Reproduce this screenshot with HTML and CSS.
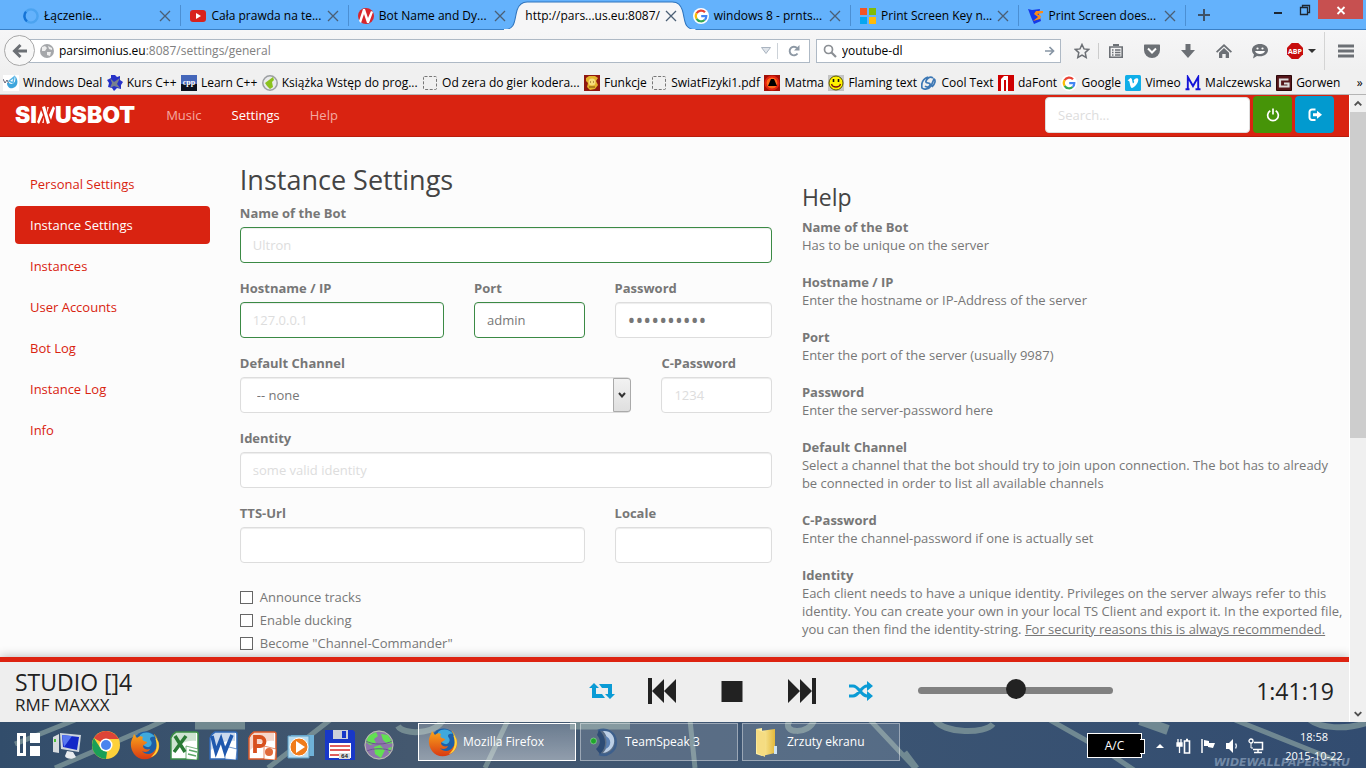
FILE: index.html
```html
<!DOCTYPE html>
<html lang="en">
<head>
<meta charset="utf-8">
<title>SinusBot - Instance Settings</title>
<link rel="stylesheet" href="styles.css">
</head>
<body>
<svg class="defs" width="0" height="0" aria-hidden="true">
  <defs>
    <linearGradient id="ff" x1="0" y1="0" x2="0" y2="1"><stop offset="0" stop-color="#f9a51b"/><stop offset="1" stop-color="#d93a12"/></linearGradient>
    <linearGradient id="fold" x1="0" y1="0" x2="1" y2="0"><stop offset="0" stop-color="#fff3b0"/><stop offset="1" stop-color="#e3b93c"/></linearGradient>
    <symbol id="close" viewBox="0 0 12 12"><path d="M1 1l10 10M11 1L1 11" fill="none" stroke="#4b5f75" stroke-width="1.3"/></symbol>
    <symbol id="google" viewBox="0 0 16 16"><circle cx="8" cy="8" r="8" fill="#fff"/><g fill="none" stroke-width="2.2"><path d="M12 4.2A5.3 5.3 0 0 0 3.6 5.2" stroke="#ea4335"/><path d="M3.6 5.2a5.3 5.3 0 0 0 0 5.6" stroke="#fbbc05"/><path d="M3.6 10.8A5.3 5.3 0 0 0 11.6 12" stroke="#34a853"/><path d="M11.6 12A5 5 0 0 0 13.3 8.2H8.2" stroke="#4285f4"/></g></symbol>
    <symbol id="blank" viewBox="0 0 16 16"><rect x="1.5" y="1.5" width="13" height="13" rx="1" fill="none" stroke="#777" stroke-dasharray="3 1.6"/></symbol>
    <symbol id="firefox" viewBox="0 0 30 30"><circle cx="15.5" cy="14" r="12.5" fill="#1d5fa8"/><path d="M10 5c4-4 12-3 15 2-5-1-6 2-4 4 2 3-1 7-4 6-5-2-9-6-7-12z" fill="#3fa9dc"/><path d="M24 5c6 5 7 14 2 19-6 7-17 7-22 0C0 18 0 12 3 7l1-3 3 4c2-2 4-2 6-1-1 2-1 3 1 4l3 1c0 2-3 2-4 4 0 3 4 4 7 3-1 3-5 4-8 2 3 4 10 4 13-1 3-4 2-8 0-11 1 0 2 1 3 3 0-3-1-5-4-8z" fill="url(#ff)"/><path d="M25 6c5 6 5 13 1 18-2 2-4 3-5 3 6-5 7-11 4-21z" fill="#ffd63c"/></symbol>
    <symbol id="office" viewBox="0 0 30 30"><path d="M7 2h20a2 2 0 0 1 2 2v25H2V8c1-2 3-5 5-6z" fill="#fff" stroke="currentColor" stroke-width="1.5"/><path d="M7 2h20v9C19 10 11 13 3 20V8z" fill="currentColor" opacity=".25"/><path d="M17 16l12 3-1 11-11-1z" fill="#fff" stroke="currentColor" stroke-width=".7"/></symbol>
  </defs>
</svg>

<header class="browser">
  <div class="tabstrip">
    <nav class="tabs" aria-label="Tabs">
      <div class="tab"><svg class="fav" viewBox="0 0 16 16"><circle cx="8" cy="8" r="6.6" fill="none" stroke="#4ba3f0" stroke-width="2.4"/><path d="M4 13.300A6.600 6.600 0 0 1 3 3.800" fill="none" stroke="#1573d6" stroke-width="2.400"/></svg><span class="tab-title">Łączenie...</span><button class="x" aria-label="Close"><svg viewBox="0 0 12 12"><use href="#close"/></svg></button></div>
      <div class="tab"><svg class="fav" viewBox="0 0 16 16"><rect y="2" width="16" height="12" rx="3" fill="#d8221e"/><path d="M6 5v6l5-3z" fill="#fff"/></svg><span class="tab-title">Cała prawda na te...</span><button class="x" aria-label="Close"><svg viewBox="0 0 12 12"><use href="#close"/></svg></button></div>
      <div class="tab tab-plain"><svg class="fav" viewBox="0 0 16 16"><circle cx="8" cy="8" r="8" fill="#d9262c"/><path d="M1 13L5 1l2 0 3 9 3-7 2 1-4 11H9L6 6l-3 9z" fill="#fff"/></svg><span class="tab-title">Bot Name and Dy...</span><button class="x" aria-label="Close"><svg viewBox="0 0 12 12"><use href="#close"/></svg></button></div>
      <div class="tab tab-active"><svg class="tab-shape" viewBox="0 0 190 30" preserveAspectRatio="none"><path d="M0 30C12 29 10 20 13 10c2-6 5-8 10-8h144c6 0 8 3 10 8 3 10 1 19 13 20z" fill="#f6f6f7" stroke="#2e74bd"/><path d="M0 30h190" stroke="#f6f6f7" stroke-width="2"/></svg><span class="tab-title">http://pars...us.eu:8087/</span><button class="x" aria-label="Close"><svg viewBox="0 0 12 12"><use href="#close"/></svg></button></div>
      <div class="tab"><svg class="fav" viewBox="0 0 16 16"><use href="#google"/></svg><span class="tab-title">windows 8 - prnts...</span><button class="x" aria-label="Close"><svg viewBox="0 0 12 12"><use href="#close"/></svg></button></div>
      <div class="tab"><svg class="fav" viewBox="0 0 16 16"><path d="M0 0h7v7H0z" fill="#f35325"/><path d="M9 0h7v7H9z" fill="#81bc06"/><path d="M0 9h7v7H0z" fill="#05a6f0"/><path d="M9 9h7v7H9z" fill="#ffba08"/></svg><span class="tab-title">Print Screen Key n...</span><button class="x" aria-label="Close"><svg viewBox="0 0 12 12"><use href="#close"/></svg></button></div>
      <div class="tab"><svg class="fav" viewBox="0 0 16 16"><path d="M0 1l4 1 8-1-1 5 2 7-7 3-3-7z" fill="#1639e8"/><path d="M15 3H8L6 6l4 3-5 4 7-2 1-3-4-2 6-1z" fill="#ff8a12"/></svg><span class="tab-title">Print Screen does...</span><button class="x" aria-label="Close"><svg viewBox="0 0 12 12"><use href="#close"/></svg></button></div>
    </nav>
    <button class="newtab" aria-label="New tab"><svg viewBox="0 0 12 12"><path d="M6 0v12M0 6h12" stroke="#3e5268" stroke-width="2"/></svg></button>
    <div class="window-buttons">
      <button aria-label="Minimize"><svg viewBox="0 0 12 12"><path d="M2 9h8" stroke="#1c2733" stroke-width="2"/></svg></button>
      <button aria-label="Restore"><svg viewBox="0 0 12 12"><path d="M1.500 3.500h7v7h-7zM3.500 3V1.500h7v7H9" fill="none" stroke="#1c2733" stroke-width="1.300"/></svg></button>
      <button class="win-close" aria-label="Close window"><svg viewBox="0 0 12 12"><path d="M2.500 3l7 7M9.500 3l-7 7" stroke="#fff" stroke-width="1.800"/></svg></button>
    </div>
  </div>

  <div class="toolbar">
    <button class="back" aria-label="Back"><svg viewBox="0 0 16 16"><path d="M8.500 2L2.500 8l6 6M3 8h12" fill="none" stroke="#6c7075" stroke-width="3"/></svg></button>
    <div class="urlbar">
      <svg class="globe" viewBox="0 0 14 14"><circle cx="7" cy="7" r="7" fill="#a5a7aa"/><path d="M2 3l3-1 2 2-2 3H2zM8 2l4 2v2l-3-1zM7 8l4 0-1 4-3-1z" fill="#eee"/></svg>
      <div class="url" role="textbox" contenteditable="true" spellcheck="false" aria-label="Address"><b>parsimonius.eu</b>:8087/settings/general</div>
      <svg class="drop" viewBox="0 0 10 7"><path d="M.5.500h9L5 6.500z" fill="#dfe4ea" stroke="#aab4c0"/></svg>
      <button class="reload" aria-label="Reload"><svg viewBox="0 0 12 12"><path d="M9.500 8.500A4.300 4.300 0 1 1 9 3" fill="none" stroke="#8d98a4" stroke-width="1.900"/><path d="M11.500 0v5.500H6z" fill="#8d98a4"/></svg></button>
    </div>
    <div class="searchbar">
      <svg class="lens" viewBox="0 0 14 14"><circle cx="5.500" cy="5.500" r="4" fill="none" stroke="#8b8f94" stroke-width="1.700"/><path d="M8.500 8.500l4.500 4.500" stroke="#8b8f94" stroke-width="2.200"/></svg>
      <input type="text" value="youtube-dl" aria-label="Web search">
      <svg class="go" viewBox="0 0 10 10"><path d="M0 5h8M4.500 1l4 4-4 4" fill="none" stroke="#8896a5" stroke-width="1.700"/></svg>
    </div>
    <div class="tools">
      <button class="tool tool-star" aria-label="Bookmark"><svg viewBox="0 0 16 16"><path d="M8 1.500l2 4.400 4.800.500-3.600 3.200 1 4.800L8 12l-4.200 2.400 1-4.800L1.200 6.400 6 5.900z" fill="none" stroke="#6c7075" stroke-width="1.500"/></svg></button>
      <button class="tool tool-line" aria-label="Bookmark list"><svg viewBox="0 0 16 16"><path d="M1.800 4h12.400v10.200H1.800z" fill="none" stroke="#6c7075" stroke-width="1.600"/><path d="M5 3V1h6v2z" fill="#6c7075"/><path d="M4 7h1.500M4 9.500h1.500M4 12h1.500M7 7h5.500M7 9.500h5.500M7 12h5.500" stroke="#6c7075" stroke-width="1.300"/></svg></button>
      <button class="tool" aria-label="Pocket"><svg viewBox="0 0 16 16"><path d="M1 1.500h14c.6 0 1 .4 1 1V7a8 8 0 0 1-16 0V2.500c0-.6.4-1 1-1z" fill="#6c7075"/><path d="M4 5.500l4 4 4-4" fill="none" stroke="#fff" stroke-width="2"/></svg></button>
      <button class="tool" aria-label="Downloads"><svg viewBox="0 0 16 16"><path d="M5.500 1h5v6H15l-7 8-7-8h4.500z" fill="#6c7075"/></svg></button>
      <button class="tool" aria-label="Home"><svg viewBox="0 0 16 16"><path d="M8 1l8 7.500-1.200 1.200L8 3.500 1.200 9.700 0 8.500z" fill="#6c7075"/><path d="M8 5l5 4.700V15H9.700v-4H6.300v4H3V9.700z" fill="#6c7075"/></svg></button>
      <button class="tool" aria-label="Chat"><svg viewBox="0 0 16 16"><path d="M8 1c4.500 0 8 2.600 8 6s-3.500 6.300-8 6.300c-1 0-2-.1-3-.4L1 15.500l1-4C.7 10.300 0 8.800 0 7c0-3.400 3.500-6 8-6z" fill="#6c7075"/><circle cx="5.500" cy="5.500" r="1.100" fill="#fff"/><circle cx="10.500" cy="5.500" r="1.100" fill="#fff"/><path d="M3 8h10c-1 4-9 4-10 0z" fill="#fff"/></svg></button>
      <button class="tool tool-abp" aria-label="Adblock Plus"><svg viewBox="0 0 16 16"><path d="M4.700 0h6.600L16 4.700v6.600L11.300 16H4.700L0 11.300V4.700z" fill="#c70d0d"/><text x="8" y="10.500" class="abp">ABP</text></svg><svg class="caret" viewBox="0 0 8 4"><path d="M0 0h8L4 4z" fill="#333"/></svg></button>
      <button class="tool tool-menu" aria-label="Menu"><svg viewBox="0 0 16 16"><path d="M0 3h16M0 8h16M0 13h16" stroke="#6c7075" stroke-width="3"/></svg></button>
    </div>
  </div>

  <nav class="bookmarks" aria-label="Bookmarks">
    <a href="#"><svg viewBox="0 0 16 16"><path d="M0 0h16v16H0z" fill="#fff"/><path d="M0 4l2 4 2-3 2 4" stroke="#667" fill="none"/><path d="M4 8c0 4 3 6 6 5 5-1 6-8 2-12 1 4 0 7-3 8-3 0-3-2-5-1z" fill="#3da5dc"/><path d="M6 6l5-4-1 6z" fill="none" stroke="#55b4e6" stroke-width="1.500"/></svg>Windows Deal</a>
    <a href="#"><svg viewBox="0 0 16 16"><path d="M8 0l2 2 3-1 0 4 3 2-2 3 0 4-4-1-3 3-2-3-4-1 1-4-2-3 4-2 0-3z" fill="#2732c8"/><path d="M3 3l4 4 6-4-3 6 3 4-6-2-4 2 2-5z" fill="#78808f"/></svg>Kurs C++</a>
    <a href="#"><svg viewBox="0 0 16 16"><path d="M0 0h16v9H0z" fill="#4567ba"/><path d="M0 9h16v7H0z" fill="#0c1220"/><text x="8" y="9.500" class="cpp">cpp</text></svg>Learn C++</a>
    <a href="#"><svg viewBox="0 0 16 16"><circle cx="8" cy="8" r="7.200" fill="#e9eaec" stroke="#9c9fa1" stroke-width="1.500"/><path d="M3 8l4-3 4-3 1 3-2 2 1 5-3 2-3-3z" fill="#8bc21e"/></svg>Książka Wstęp do prog...</a>
    <a href="#"><svg viewBox="0 0 16 16"><use href="#blank"/></svg>Od zera do gier kodera...</a>
    <a href="#"><svg viewBox="0 0 16 16"><path d="M0 0h16v16H0z" fill="#8f1711"/><path d="M2 3l3-2h6l3 2-2 3 2 4-3 4-5 1-3-3 1-4-2-2z" fill="#e4b32c"/><circle cx="8" cy="7" r="3.500" fill="#f6dc7c"/><path d="M6 7h1M9 7h1M5 12h6" stroke="#7b4c0c"/></svg>Funkcje</a>
    <a href="#"><svg viewBox="0 0 16 16"><use href="#blank"/></svg>SwiatFizyki1.pdf</a>
    <a href="#"><svg viewBox="0 0 16 16"><path d="M0 0h16v16H0z" fill="#a30f06"/><circle cx="8" cy="8" r="6" fill="#ff6a1c"/><circle cx="8" cy="8" r="6.500" fill="none" stroke="#e32412" stroke-width="2"/><path d="M4 11l3-7h3l3 7z" fill="#000"/></svg>Matma</a>
    <a href="#"><svg viewBox="0 0 16 16"><path d="M0 0h16v16H0z" fill="#c4c4c4"/><circle cx="8" cy="8" r="7" fill="#fff200" stroke="#5a5600"/><path d="M5.500 4v3M10.500 4v3" stroke="#111" stroke-width="1.600"/><path d="M3.500 9c1 4 8 4 9 0" fill="none" stroke="#711" stroke-width="1.300"/></svg>Flaming text</a>
    <a href="#"><svg viewBox="0 0 16 16"><path d="M7 2C2 4 0 8 1 13c2 2 7 1 9-2l3-7c2 1 1 5-2 8M12 3C9 1 6 3 5 6s5 1 4 4-4 2-5 1" fill="none" stroke="#3d78b5" stroke-width="1.700"/></svg>Cool Text</a>
    <a href="#"><svg viewBox="0 0 16 16"><path d="M0 0h16v16H0z" fill="#cf0000"/><path d="M3 4l3-3h4v15H8V5H6v11H3z" fill="#fff"/></svg>daFont</a>
    <a href="#"><svg viewBox="0 0 16 16"><use href="#google"/></svg>Google</a>
    <a href="#"><svg viewBox="0 0 16 16"><rect width="16" height="16" rx="1.500" fill="#10aee8"/><path d="M2.500 5.500L5.500 3c2 0 1.500 4 2.500 5.500C10 7 9 6 8.500 6c.5-3 5-4 4.800-1C13 9 8.500 13 7 13c-2 0-2-6-3-7z" fill="#fff"/></svg>Vimeo</a>
    <a href="#"><svg viewBox="0 0 16 16"><path d="M.500 14.200h4M10.500 14.200h5M2.800 14V2l5.200 9 5.200-9v12" fill="none" stroke="#1414d8" stroke-width="1.900"/></svg>Malczewska</a>
    <a href="#"><svg viewBox="0 0 16 16"><path d="M.5.500h15v15H.5z" fill="#55161a" stroke="#2c080a"/><path d="M12.500 4.500H4v7h8.500V8.500H8" fill="none" stroke="#ddd" stroke-width="2.200"/></svg>Gorwen</a>
    <button class="more" aria-label="More bookmarks">»</button>
  </nav>
</header>

<div class="viewport">
  <div class="page">
    <header class="navbar">
      <a class="logo" href="#" aria-label="SinusBot"><span>SI</span><svg viewBox="0 0 18 18"><path d="M5 1L8 0l5 17-3 1z" fill="#fff"/><path d="M4 4L0 16l2 2 4-9zM14 14l4-12-2-2-4 9z" fill="#fff"/><path d="M7 11l-2 6h2zM10 7l2-6h-2z" fill="#ffd9d4"/></svg><span>USBOT</span></a>
      <nav class="mainnav"><a href="#">Music</a><a href="#" class="on">Settings</a><a href="#">Help</a></nav>
      <input class="site-search" type="text" placeholder="Search..." aria-label="Search">
      <button class="btn btn-green" aria-label="Power"><svg viewBox="0 0 14 14"><path d="M4.300 2.800a5.300 5.300 0 1 0 5.400 0M7 .5v6" fill="none" stroke="#fff" stroke-width="1.700"/></svg></button>
      <button class="btn btn-blue" aria-label="Log out"><svg viewBox="0 0 14 14"><path d="M7.500 1.500H4A2.500 2.500 0 0 0 1.500 4v5.500A2.500 2.500 0 0 0 4 12h3.500" fill="none" stroke="#fff" stroke-width="2"/><path d="M5 5.300h4V2.800l5 4-5 4V8.300H5z" fill="#fff"/></svg></button>
    </header>

    <main class="columns">
      <nav class="side" aria-label="Settings">
        <a href="#">Personal Settings</a>
        <a href="#" class="on">Instance Settings</a>
        <a href="#">Instances</a>
        <a href="#">User Accounts</a>
        <a href="#">Bot Log</a>
        <a href="#">Instance Log</a>
        <a href="#">Info</a>
      </nav>

      <form class="form">
        <h1>Instance Settings</h1>
        <div class="fields">
          <div class="field w12"><label for="name">Name of the Bot</label><input id="name" class="valid" type="text" placeholder="Ultron"></div>
          <div class="field w5"><label for="host">Hostname / IP</label><input id="host" class="valid" type="text" placeholder="127.0.0.1"></div>
          <div class="field w3"><label for="port">Port</label><input id="port" class="valid" type="text" value="admin"></div>
          <div class="field w4"><label for="pass">Password</label><input id="pass" class="secret" type="password" value="abcdefghij"></div>
          <div class="field w9"><label for="chan">Default Channel</label>
            <div class="select"><select id="chan"><option>-- none</option></select><span class="select-arrow"><svg viewBox="0 0 8 6"><path d="M1 1l3 3.500L7 1" fill="none" stroke="#333" stroke-width="2"/></svg></span></div></div>
          <div class="field w3"><label for="cpass">C-Password</label><input id="cpass" type="text" placeholder="1234"></div>
          <div class="field w12"><label for="ident">Identity</label><input id="ident" type="text" placeholder="some valid identity"></div>
          <div class="field w8"><label for="tts">TTS-Url</label><input id="tts" type="text"></div>
          <div class="field w4"><label for="loc">Locale</label><input id="loc" type="text"></div>
        </div>
        <div class="checks">
          <label><input type="checkbox">Announce tracks</label>
          <label><input type="checkbox">Enable ducking</label>
          <label><input type="checkbox">Become "Channel-Commander"</label>
        </div>
      </form>

      <aside class="help">
        <h2>Help</h2>
        <dl>
          <dt>Name of the Bot</dt><dd>Has to be unique on the server</dd>
          <dt>Hostname / IP</dt><dd>Enter the hostname or IP-Address of the server</dd>
          <dt>Port</dt><dd>Enter the port of the server (usually 9987)</dd>
          <dt>Password</dt><dd>Enter the server-password here</dd>
          <dt>Default Channel</dt><dd>Select a channel that the bot should try to join upon connection. The bot has to already be connected in order to list all available channels</dd>
          <dt>C-Password</dt><dd>Enter the channel-password if one is actually set</dd>
          <dt>Identity</dt><dd>Each client needs to have a unique identity. Privileges on the server always refer to this identity. You can create your own in your local TS Client and export it. In the exported file, you can then find the identity-string. <u>For security reasons this is always recommended.</u></dd>
        </dl>
      </aside>
    </main>

    <footer class="player">
      <div class="track"><div class="track-title">STUDIO []4</div><div class="track-sub">RMF MAXXX</div></div>
      <div class="controls">
        <button class="mini" aria-label="Repeat"><svg viewBox="0 0 26 18"><path d="M0 6l5-5 5 5H7v6h6l3 4H3V6zM26 12l-5 5-5-5h3V6h-6l-3-4h13v10z" fill="#0a9bd5"/></svg></button>
        <button aria-label="Previous"><svg viewBox="0 0 30 26"><path d="M1 0h4v26H1zM5 13L17 1v24zM17 13L29 1v24z" fill="#222"/></svg></button>
        <button class="stop" aria-label="Stop"><svg viewBox="0 0 30 26"><path d="M4.500 3h21v21h-21z" fill="#222"/></svg></button>
        <button aria-label="Next"><svg viewBox="0 0 30 26"><path d="M25 0h4v26h-4zM1 1l12 12L1 25zM13 1l12 12-12 12z" fill="#222"/></svg></button>
        <button class="mini" aria-label="Shuffle"><svg viewBox="0 0 26 20"><path d="M1 5h4c6 0 8 10 14 10h2M1 15h4c6 0 8-10 14-10h2" fill="none" stroke="#0a9bd5" stroke-width="3.200"/><path d="M19 0l6 5-6 5zM19 10l6 5-6 5z" fill="#0a9bd5"/></svg></button>
      </div>
      <input class="volume" type="range" min="0" max="100" value="50" aria-label="Volume">
      <time class="elapsed">1:41:19</time>
    </footer>
  </div>
  <div class="scrollbar" aria-hidden="true">
    <svg class="sb-arrow" viewBox="0 0 17 17"><path d="M5 10.500L8.500 7l3.500 3.500" fill="none" stroke="#505050" stroke-width="2"/></svg>
    <div class="sb-track"><div class="sb-thumb"></div></div>
    <svg class="sb-arrow" viewBox="0 0 17 17"><path d="M5 7l3.500 3.500L12 7" fill="none" stroke="#505050" stroke-width="2"/></svg>
  </div>
</div>

<footer class="taskbar">
  <svg class="wallpaper" viewBox="0 0 1366 46" preserveAspectRatio="xMidYMid slice" aria-hidden="true"><g fill="none" stroke="#8fa7a4" opacity=".65"><path d="M15 22L75-2M55 46L150 5 165-2M268 46L330-2M485 46L508-2M695 46L690-2M870-2L915 46M905 30l12 16M1050-2l60 34 30 20M1235-2l100 40" stroke-width="5"/><path d="M195 3h50M570 3h60" stroke-width="9"/><path d="M398 4c5 9 36 9 45-6M790-2c-10 14 20 15 24 0M935-2c10 14 50 14 58 4M1310-2c10 8 35 10 56 3" stroke-width="6"/><path d="M1140-2l28 10" stroke-width="10"/></g></svg>
  <div class="launch">
    <button aria-label="Start"><svg viewBox="0 0 30 30"><path d="M5.500 4.500h6v20h-6z" fill="none" stroke="#fff" stroke-width="3"/><path d="M17 3h10v10H17zM17 16h10v10H17z" fill="#fff"/></svg></button>
    <button aria-label="Computer"><svg viewBox="0 0 30 30"><path d="M1 7l6-3v19l-6-1z" fill="#d7dbde"/><path d="M8 3l21 2-2 17-18-3z" fill="#cfd6dd"/><path d="M10 5l17 2-2 13-14-3z" fill="#1327c8"/><path d="M10 5l10 1-8 11z" fill="#5877f0"/><path d="M15 21l6 1 3 5c-4 3-10 2-11-1z" fill="#e8ebee"/><path d="M2 9h2v3H2z" fill="#4bc332"/></svg></button>
    <button aria-label="Chrome"><svg viewBox="0 0 30 30"><circle cx="15" cy="15" r="14" fill="#fdd13a"/><path d="M15 15L2.900 8A14 14 0 0 1 27.100 8L28 9H15z" fill="#dc4437"/><path d="M15 29A14 14 0 0 1 2.900 8L10 19l6 3z" fill="#1a9f57"/><circle cx="15" cy="15" r="6.500" fill="#fff"/><circle cx="15" cy="15" r="5" fill="#4a84ee"/></svg></button>
    <button aria-label="Firefox"><svg viewBox="0 0 30 30"><use href="#firefox"/></svg></button>
    <button class="xl" aria-label="Excel"><svg viewBox="0 0 30 30"><use href="#office"/><path d="M6 6l10 16M17 6L5 22" stroke="#2a7a35" stroke-width="3.500"/><path d="M20 20l8 2M19 24l8 2" stroke="#5aa865" stroke-width="1.500"/></svg></button>
    <button class="wd" aria-label="Word"><svg viewBox="0 0 30 30"><use href="#office"/><path d="M4 6l4 16 5-13 4 13L24 5" fill="none" stroke="#1f58ae" stroke-width="3.500"/></svg></button>
    <button class="pp" aria-label="PowerPoint"><svg viewBox="0 0 30 30"><use href="#office"/><path d="M8 23V7h5a4 4 0 0 1 0 9H8" fill="none" stroke="#d8501d" stroke-width="3.800"/><circle cx="22" cy="22" r="4" fill="#e06a3a"/></svg></button>
    <button aria-label="Media player"><svg viewBox="0 0 30 30"><path d="M5 5h23v21H5z" fill="#6fb2d8"/><path d="M2 6h21v22H2z" fill="#b8dcef" stroke="#5b9dc4"/><circle cx="13" cy="17" r="9" fill="#f07c1b" stroke="#fff"/><path d="M10 11v12l9-6z" fill="#fff"/></svg></button>
    <button aria-label="Total Commander"><svg viewBox="0 0 30 30"><path d="M0 0h28l2 2v28H0z" fill="#1838c8"/><path d="M8 0h15v9H8z" fill="#ccd0da"/><path d="M17 1h4v7h-4z" fill="#1838c8"/><path d="M4 13h22v15H4z" fill="#fff"/><path d="M5 16h20M5 20h20M5 25h9" stroke="#d62a2a" stroke-width="1.300"/><path d="M14 23h11v6H14z" fill="#ddd"/><text x="19.500" y="28" class="n64">64</text></svg></button>
    <button aria-label="Globe"><svg viewBox="0 0 30 30"><circle cx="15" cy="15" r="14.500" fill="#8f75ac"/><path d="M4 6l8-4 2 4-4 3 2 4-6 2-4-3zM17 4l7 1 5 8-6 1-4-4zM10 17l6-2 5 5-4 8-6-4zM24 18l4-1-3 7z" fill="#62e052"/><path d="M2 11c6 4 20 4 26 0M3 21c6-3 18-3 24 0" fill="none" stroke="#6c5590"/><circle cx="15" cy="15" r="14" fill="none" stroke="#b6c7a8"/></svg></button>
  </div>
  <div class="windows">
    <button class="win win-on"><svg viewBox="0 0 30 30"><use href="#firefox"/></svg>Mozilla Firefox</button>
    <button class="win"><svg viewBox="0 0 30 30"><path d="M8 4A12.500 12.500 0 1 1 9 27" fill="none" stroke="#3d5f8c" stroke-width="2.500"/><path d="M13 4c15-1 15 20 0 22 6-6 6-16 0-22z" fill="#bccfe6"/><path d="M15 9c7 2 7 11 0 13 2-4 2-9 0-13z" fill="#5c81b3"/><path d="M9 3c8 7 8 18 1 24l-4-5c5-5 5-9 1-14z" fill="#2d4b74"/><circle cx="3.500" cy="14" r="3" fill="#1fa72b" stroke="#9fe0a5" stroke-width=".6"/></svg>TeamSpeak 3</button>
    <button class="win"><svg viewBox="0 0 30 30"><path d="M4 2l6-1v28l-6-2z" fill="#fff0a6"/><path d="M8 4l15-2v24l-13 3z" fill="url(#fold)"/><path d="M4 2l9 4v24l-8-4z" fill="#f5dc82"/><path d="M22 19h3v8h-3z" fill="#cfe3f2"/></svg>Zrzuty ekranu</button>
  </div>
  <div class="tray">
    <div class="power">A/C</div>
    <button aria-label="Show hidden icons"><svg class="up" viewBox="0 0 8 4"><path d="M0 4h8L4 0z" fill="#fff"/></svg></button>
    <button aria-label="Battery"><svg viewBox="0 0 16 16"><path d="M2 1v4M5 1v4M3.500 8v7M1 5h5v3H1z" fill="#fff" stroke="#fff" stroke-width="1.300"/><path d="M8.500 3h5v12h-5zM10 1.500h2" fill="none" stroke="#fff" stroke-width="1.600"/></svg></button>
    <button aria-label="Action center"><svg viewBox="0 0 16 16"><path d="M2 1v14" stroke="#fff" stroke-width="1.500"/><path d="M4 2l5 1v2l6 0-2 5-5-1V8L4 8z" fill="#fff"/></svg></button>
    <button aria-label="Volume"><svg viewBox="0 0 16 16"><path d="M2 5h3l4-4v14l-4-4H2z" fill="#fff"/><path d="M11.500 5.500c1.500 2 1.500 3 0 5" fill="none" stroke="#dce4ec" stroke-width="1.300"/></svg></button>
    <button aria-label="Network"><svg viewBox="0 0 16 16"><path d="M6 4.500h8.500v7H5M10 12v2.500M6 14.500h8" fill="none" stroke="#fff" stroke-width="1.500"/><circle cx="3" cy="3" r="2" fill="none" stroke="#fff" stroke-width="1.300"/><path d="M3 5v5h2" stroke="#fff" fill="none"/></svg></button>
    <div class="clock"><span>18:58</span><span>2015-10-22</span><i class="watermark">WIDEWALLPAPERS.RU</i></div>
  </div>
</footer>
</body>
</html>
```
FILE: styles.css
```css
* { box-sizing: border-box; }
body {
  margin: 0;
  height: 100vh;
  display: flex;
  flex-direction: column;
  overflow: hidden;
  font: 13px/18px "Open Sans", "Noto Sans", sans-serif;
  color: #777;
}
button { border: 0; padding: 0; margin: 0; background: none; font: inherit; color: inherit; display: flex; align-items: center; justify-content: center; }
a { text-decoration: none; color: inherit; }
svg { display: block; flex: none; }
.defs { position: absolute; }

/* browser chrome */
.browser { flex: none; font-size: 12px; color: #000; background: #f0f0f0; border-bottom: 1px solid #b4b4b4; }
.tabstrip { display: flex; height: 30px; background: #64b2fc; border-bottom: 1px solid #3a80c6; padding-left: 14px; }
.tabs { display: flex; flex: 0 1 1172px; min-width: 0; }
.tab { position: relative; flex: 1 1 0; min-width: 0; display: flex; align-items: center; gap: 5px; padding: 2px 10px 0 9px; }
.tab::after { content: ""; position: absolute; right: 0; top: 5px; height: 21px; width: 1px; background: #4b8fd3; }
.tab-plain::after, .tab-active::after { display: none; }
.tab-title { flex: 1 0 auto; white-space: nowrap; position: relative; }
.tab .fav { width: 16px; height: 16px; }
.x { position: relative; }
.x svg { width: 12px; height: 12px; }
.tab-shape { position: absolute; left: -12px; right: -12px; top: 0; width: calc(100% + 24px); height: 30px; z-index: 0; }
.newtab { width: 36px; }
.newtab svg { width: 12px; height: 12px; }
.window-buttons { display: flex; margin-left: auto; padding-right: 3px; }
.window-buttons button { width: 27px; height: 19px; }
.window-buttons svg { width: 12px; height: 12px; }
.window-buttons .win-close { width: 45px; background: #c75050; }

.toolbar { display: flex; align-items: center; height: 41px; background: linear-gradient(#f6f6f7, #f0f0f0); padding-left: 4px; }
.back { position: relative; z-index: 1; width: 31px; height: 31px; border: 1px solid #a8a8a8; border-radius: 50%; background: #f7f7f7; margin-right: -15px; }
.back svg { width: 16px; height: 16px; }
.urlbar, .searchbar { display: flex; align-items: center; height: 24px; background: #fff; border: 1px solid #aeb9c5; }
.urlbar { flex: 1; padding-left: 19px; }
.globe { width: 14px; height: 14px; margin-right: 5px; }
.url { flex: 1; color: #808080; outline: 0; white-space: nowrap; }
.url b { font-weight: normal; color: #000; }
.drop { width: 10px; height: 7px; margin-right: 6px; }
.reload { width: 32px; height: 16px; border-left: 1px solid #ccd2d8; }
.reload svg { width: 12px; height: 12px; }
.searchbar { width: 245px; margin-left: 6px; padding: 0 5px 0 6px; gap: 5px; }
.searchbar input { flex: 1; min-width: 0; border: 0; outline: 0; padding: 0; font: inherit; color: #000; }
.lens { width: 14px; height: 14px; }
.go { width: 10px; height: 10px; }
.tools { display: flex; padding-left: 5px; }
.tool { width: 36px; height: 38px; }
.tool svg { width: 16px; height: 16px; }
.tool-star { width: 32px; }
.tool-line { background: linear-gradient(#ccc, #ccc) left center / 1px 16px no-repeat; }
.tool-abp { width: 46px; gap: 5px; }
.tool .caret { width: 8px; height: 4px; }
.tool-menu { width: 42px; border-left: 1px solid #d4d4d4; }
.abp { font: bold 7px "Open Sans", sans-serif; fill: #fff; text-anchor: middle; }
.cpp { font: bold 8px "Liberation Serif", serif; fill: #fff; text-anchor: middle; }
.n64 { font: bold 6px "Liberation Mono", monospace; fill: #222; text-anchor: middle; }

.bookmarks { display: flex; align-items: center; justify-content: space-between; height: 23px; padding: 0 3px; white-space: nowrap; }
.bookmarks a { display: flex; align-items: center; gap: 4px; }
.bookmarks svg { width: 16px; height: 16px; }
.more { padding-left: 12px; }

/* web page */
.viewport { flex: 1; min-height: 0; display: flex; }
.page { flex: 1; min-width: 0; display: flex; flex-direction: column; background: #fcfcfc; }
.navbar { flex: none; display: flex; align-items: center; height: 42px; padding: 0 15px 2px; background: #d92311; border-bottom: 1px solid #b81d0d; }
.logo { display: flex; align-items: center; color: #fff; font: 900 23px/22px Inter, sans-serif; }
.logo svg { width: 18px; height: 18px; }
.mainnav { display: flex; flex: 1; gap: 30px; margin-left: 31px; color: #f4aaa2; }
.mainnav .on { color: #fff; }
input, select { font-family: inherit; }
.site-search { width: 205px; height: 36px; border: 1px solid #ddd; border-radius: 4px; padding: 0 12px; font-size: 13px; color: #777; background: #fff; }
::placeholder { color: #ddd; opacity: 1; }
.btn { width: 39px; height: 37px; margin-left: 3px; border-radius: 4px; }
.btn svg { width: 14px; height: 14px; }
.btn-green { background: #469408; }
.btn-blue { background: #029acf; }

.columns { flex: 1; min-height: 0; overflow: hidden; display: grid; grid-template-columns: 2fr 5fr 5fr; align-items: start; }
.columns > * { min-width: 0; padding: 28px 15px 0; }
.side { display: flex; flex-direction: column; gap: 3px; color: #d9230f; }
.side a { padding: 10px 15px; border-radius: 4px; }
.side .on { background: #d92311; color: #fff; }
h1, h2 { margin: 0; font-weight: 400; color: #444; }
h1 { font-size: 27px; line-height: 30px; margin-bottom: 9px; }
h2 { font-size: 23px; line-height: 26px; margin-bottom: 8px; }
.fields { display: grid; grid-template-columns: repeat(12, 1fr); gap: 16px 30px; }
.field label { display: block; font-weight: 700; margin-bottom: 5px; }
.field input, .select select { display: block; width: 100%; height: 36px; border: 1px solid #ddd; border-radius: 4px; padding: 0 12px; font-size: 13px; color: #777; background: #fff; box-shadow: inset 0 1px 1px rgba(0, 0, 0, .075); }
.field .valid { border-color: #3b8a45; }
.field .secret { font-size: 21px; }
.w3 { grid-column: span 3; }
.w4 { grid-column: span 4; }
.w5 { grid-column: span 5; }
.w8 { grid-column: span 8; }
.w9 { grid-column: span 9; }
.w12 { grid-column: span 12; }
.select { position: relative; }
.select select { appearance: none; padding: 0 16px; }
.select-arrow { position: absolute; right: 0; top: 1px; bottom: 1px; width: 18px; display: flex; align-items: center; justify-content: center; border: 1px solid #aaa; border-radius: 0 3px 3px 0; background: linear-gradient(#f2f2f2, #dfdfdf); pointer-events: none; }
.select-arrow svg { width: 8px; height: 6px; }
.checks { display: flex; flex-direction: column; gap: 5px; margin-top: 25px; }
.checks label { display: flex; align-items: center; gap: 7px; }
.checks input { appearance: none; width: 13px; height: 13px; margin: 0; border: 1px solid #666; background: #fff; }
.columns .help { padding: 47px 5px 0 15px; }
dl, dd { margin: 0; }
dt { font-weight: 700; }
dd { margin-bottom: 19px; }

.player { flex: none; position: relative; display: grid; grid-template-columns: 3fr 285px 195px 1fr; column-gap: 44px; align-items: center; height: 65px; padding: 0 15px 3px; border-top: 5px solid #dd2311; background: #eee; color: #222; box-shadow: 0 0 10px rgba(0, 0, 0, .3); clip-path: inset(-12px 0 0 0); }
.track { padding-top: 4px; }
.track-title, .elapsed { font-size: 23px; line-height: 24px; }
.track-sub { font-size: 17px; line-height: 22px; }
.controls { display: flex; justify-content: space-between; align-items: center; }
.controls svg { width: 30px; height: 26px; }
.controls .mini svg { width: 26px; height: 20px; }
.controls .stop { padding: 0 8px; }
.volume { appearance: none; width: 100%; height: 20px; margin: 0; background: none; }
.volume::-webkit-slider-runnable-track { height: 7px; border-radius: 4px; background: #808080; }
.volume::-webkit-slider-thumb { appearance: none; width: 20px; height: 20px; margin-top: -8px; border-radius: 50%; background: #222; }
.elapsed { text-align: right; }

.scrollbar { flex: 0 0 17px; display: flex; flex-direction: column; background: #f0f0f0; border-left: 1px solid #fff; }
.sb-arrow { width: 16px; height: 17px; }
.sb-track { flex: 1; }
.sb-thumb { height: 55%; background: #cdcdcd; }

/* taskbar */
.taskbar { flex: none; position: relative; display: flex; align-items: flex-start; height: 46px; padding: 1px 16px 0 13px; background: linear-gradient(90deg, #324d6b, #44586f 30%, #3c5573 60%, #324c70); color: #fff; font-size: 12px; }
.wallpaper { position: absolute; inset: 0; width: 100%; height: 100%; }
.launch, .windows, .tray { position: relative; display: flex; }
.launch { gap: 9px; padding-top: 7px; width: 405px; }
.launch svg { width: 30px; height: 30px; }
.xl { color: #3b8f46; }
.wd { color: #3069b8; }
.pp { color: #dc5a2a; }
.windows { gap: 4px; }
.win { width: 158px; height: 38px; gap: 5px; padding-left: 9px; justify-content: flex-start; border: 1px solid rgba(255, 255, 255, .4); background: rgba(255, 255, 255, .14); }
.win-on { border-color: #fff; background: linear-gradient(rgba(255, 255, 255, .22), rgba(255, 255, 255, .42)); }
.win svg { width: 30px; height: 30px; }
.tray { margin-left: auto; height: 45px; align-items: center; gap: 8px; }
.power { position: relative; width: 55px; height: 25px; line-height: 23px; text-align: center; border: 1px solid #fff; background: #000; margin-right: 6px; }
.power::after { content: ""; position: absolute; right: -4px; top: 5px; width: 4px; height: 13px; background: #000; border: 1px solid #fff; border-left: 0; }
.tray svg { width: 16px; height: 16px; }
.tray .up { width: 8px; height: 4px; margin-right: 4px; }
.clock { position: relative; width: 72px; margin-left: 6px; text-align: center; display: flex; flex-direction: column; font-size: 11px; }
.clock span { position: relative; z-index: 1; line-height: 19px; }
.watermark { position: absolute; right: 0; bottom: -4px; font: italic 700 11px/12px "DejaVu Sans", sans-serif; color: #8299b5; opacity: .8; }
```
